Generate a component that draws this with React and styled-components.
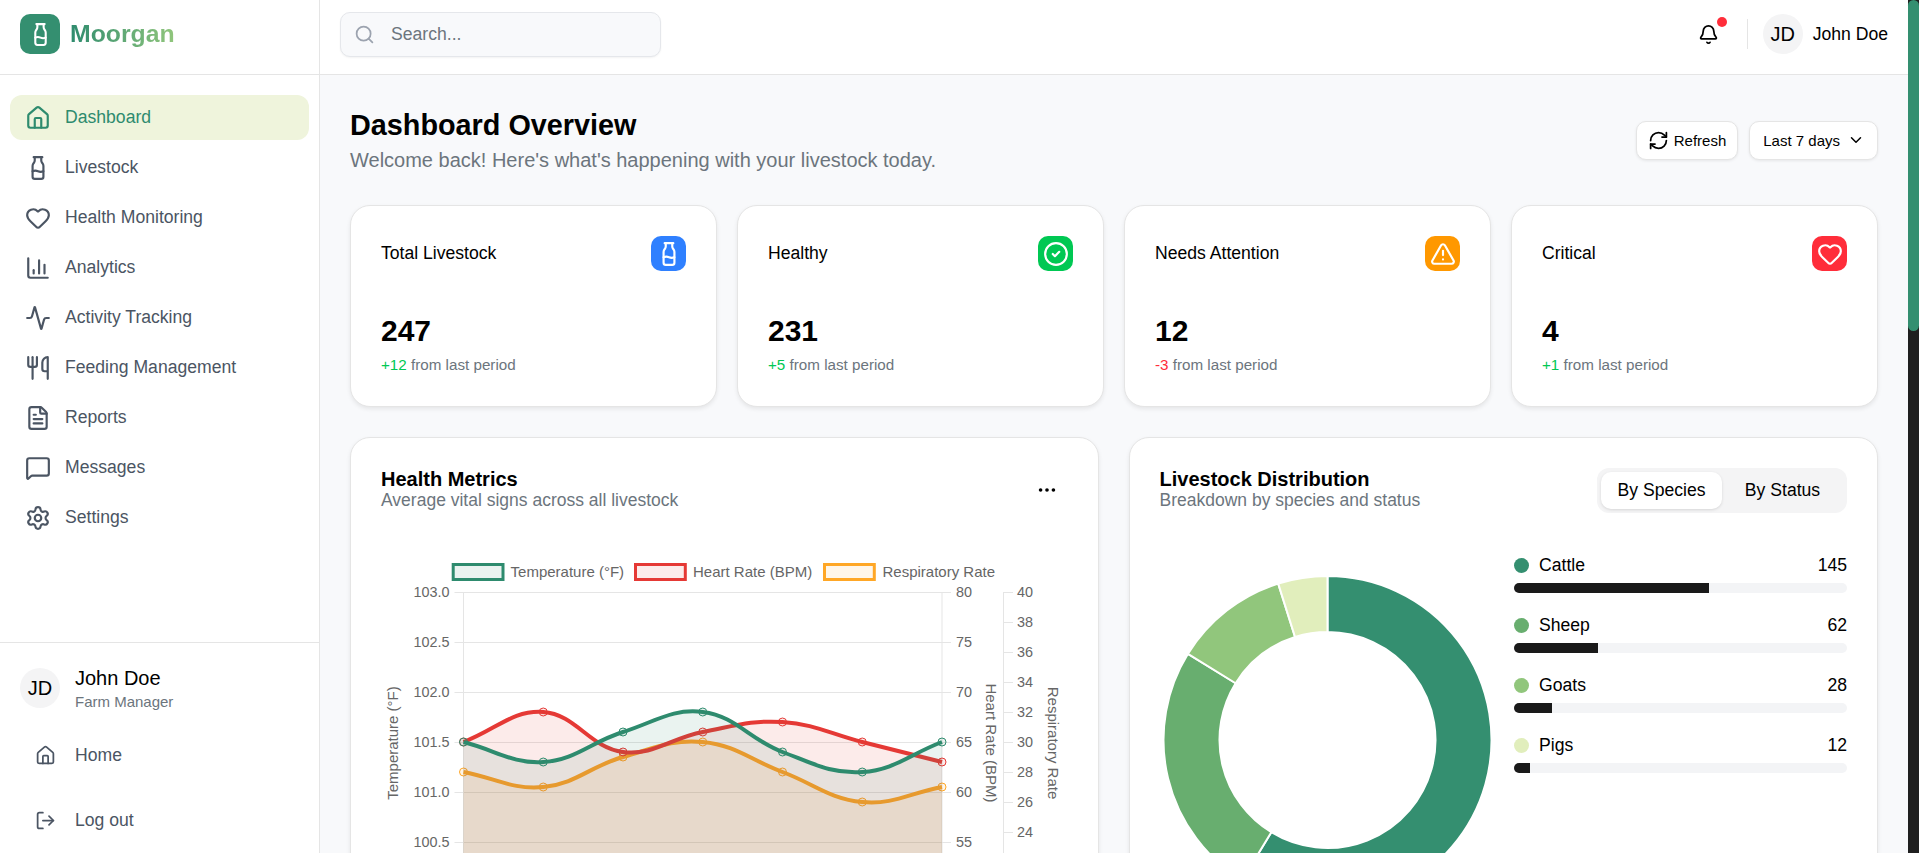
import React from 'react';
import styled, {createGlobalStyle} from 'styled-components';
import {
  Home, Milk, Heart, ChartColumn, Activity, Utensils, FileText,
  MessageSquare, Settings, LogOut, Search, Bell, RefreshCw, ChevronDown,
  CircleCheck, TriangleAlert, Ellipsis,
} from 'lucide-react';

const GlobalStyle = createGlobalStyle`
  * { box-sizing: border-box; }
  html, body { margin: 0; height: 100%; overflow: hidden; }
  body {
    font-family: "Liberation Sans", Arial, sans-serif;
    background: #f8f9fb;
    color: #000;
  }
`;

const navItems = [
  {label: 'Dashboard', icon: Home, active: true},
  {label: 'Livestock', icon: Milk},
  {label: 'Health Monitoring', icon: Heart},
  {label: 'Analytics', icon: ChartColumn},
  {label: 'Activity Tracking', icon: Activity},
  {label: 'Feeding Management', icon: Utensils},
  {label: 'Reports', icon: FileText},
  {label: 'Messages', icon: MessageSquare},
  {label: 'Settings', icon: Settings},
];

const stats = [
  {title: 'Total Livestock', value: 247, change: '+12', up: true, color: '#2f80ff', icon: Milk},
  {title: 'Healthy', value: 231, change: '+5', up: true, color: '#00c853', icon: CircleCheck},
  {title: 'Needs Attention', value: 12, change: '-3', up: false, color: '#ff9800', icon: TriangleAlert},
  {title: 'Critical', value: 4, change: '+1', up: true, color: '#ff2d3a', icon: Heart},
];

const species = [
  {name: 'Cattle', count: 145, color: '#348f70'},
  {name: 'Sheep', count: 62, color: '#68ae6f'},
  {name: 'Goats', count: 28, color: '#91c67c'},
  {name: 'Pigs', count: 12, color: '#e1eebc'},
];
const totalCount = 247;

// chart geometry
const chart = {left: 112.5, right: 591, top: 82, tick: 50, width: 748, height: 430};
const stepX = (chart.right - chart.left) / 6;
const series = [
  {
    name: 'Temperature (°F)',
    stroke: '#2e8b6e',
    fill: 'rgba(46,139,110,0.1)',
    y: v => chart.top + (103 - v) * 100,
    data: [101.5, 101.3, 101.6, 101.8, 101.4, 101.2, 101.5],
    boxX: 100.7,
    textX: 159.6,
  },
  {
    name: 'Heart Rate (BPM)',
    stroke: '#e53935',
    fill: 'rgba(229,57,53,0.1)',
    y: v => chart.top + (80 - v) * 10,
    data: [65, 68, 64, 66, 67, 65, 63],
    boxX: 283,
    textX: 342,
  },
  {
    name: 'Respiratory Rate',
    stroke: '#ffa726',
    fill: 'rgba(255,167,38,0.1)',
    y: v => chart.top + (40 - v) * 15,
    data: [28, 27, 29, 30, 28, 26, 27],
    boxX: 472,
    textX: 531.5,
  },
];

// same curve as chart.js tension 0.4
function splinePath(points) {
  const t = 0.4;
  const ctrl = points.map((p, i) => {
    const prev = points[i - 1] || p;
    const next = points[i + 1] || p;
    const d01 = Math.hypot(p.x - prev.x, p.y - prev.y);
    const d12 = Math.hypot(next.x - p.x, next.y - p.y);
    const sum = d01 + d12 || 1;
    const fa = (t * d01) / sum;
    const fb = (t * d12) / sum;
    return {
      inX: p.x - fa * (next.x - prev.x),
      inY: p.y - fa * (next.y - prev.y),
      outX: p.x + fb * (next.x - prev.x),
      outY: p.y + fb * (next.y - prev.y),
    };
  });
  let d = `M${points[0].x} ${points[0].y}`;
  for (let i = 1; i < points.length; i++) {
    d += ` C${ctrl[i - 1].outX} ${ctrl[i - 1].outY} ${ctrl[i].inX} ${ctrl[i].inY} ${points[i].x} ${points[i].y}`;
  }
  return d;
}

function arcPath(cx, cy, r, r2, a0, a1) {
  const pt = (rad, a) => [cx + rad * Math.sin(a), cy - rad * Math.cos(a)];
  const large = a1 - a0 > Math.PI ? 1 : 0;
  const [x0, y0] = pt(r, a0);
  const [x1, y1] = pt(r, a1);
  const [x2, y2] = pt(r2, a1);
  const [x3, y3] = pt(r2, a0);
  return `M${x0} ${y0}A${r} ${r} 0 ${large} 1 ${x1} ${y1}L${x2} ${y2}A${r2} ${r2} 0 ${large} 0 ${x3} ${y3}Z`;
}

function HealthChart() {
  const leftTicks = ['103.0', '102.5', '102.0', '101.5', '101.0', '100.5', '100.0'];
  const heartTicks = [80, 75, 70, 65, 60, 55, 50];
  const respTicks = [40, 38, 36, 34, 32, 30, 28, 26, 24, 22, 20];
  const bottom = chart.top + chart.tick * 6;
  return (
    <ChartSvg viewBox={`0 0 ${chart.width} ${chart.height}`}>
      {leftTicks.map((t, i) => {
        const y = chart.top + i * chart.tick + 0.5;
        return (
          <g key={t}>
            <line x1={chart.left - 9} x2={chart.right + 9} y1={y} y2={y} stroke="#e5e5e5" />
            <TickText x={chart.left - 14} y={y + 4} textAnchor="end">{t}</TickText>
            <TickText x={chart.right + 14} y={y + 4}>{heartTicks[i]}</TickText>
          </g>
        );
      })}
      {respTicks.map((t, i) => {
        const y = chart.top + i * 30 + 0.5;
        return (
          <g key={t}>
            <line x1={652.5} x2={662} y1={y} y2={y} stroke="#e5e5e5" />
            <TickText x={666} y={y + 4}>{t}</TickText>
          </g>
        );
      })}
      <line x1={chart.left} x2={chart.left} y1={chart.top} y2={bottom} stroke="#e5e5e5" />
      <line x1={chart.right} x2={chart.right} y1={chart.top} y2={bottom} stroke="#e5e5e5" />
      <line x1={652.5} x2={652.5} y1={chart.top} y2={bottom} stroke="#e5e5e5" />

      <AxisTitle transform="translate(47 233) rotate(-90)">Temperature (°F)</AxisTitle>
      <AxisTitle transform="translate(634.5 233) rotate(90)">Heart Rate (BPM)</AxisTitle>
      <AxisTitle transform="translate(697 233) rotate(90)">Respiratory Rate</AxisTitle>

      {[...series].reverse().map(s => {
        const pts = s.data.map((v, i) => ({x: chart.left + i * stepX, y: s.y(v)}));
        const line = splinePath(pts);
        return (
          <g key={s.name}>
            <path d={`${line} L${chart.right} ${bottom} L${chart.left} ${bottom} Z`} fill={s.fill} />
            <path d={line} fill="none" stroke={s.stroke} strokeWidth="4" />
            {pts.map(p => (
              <circle key={p.x} cx={p.x} cy={p.y} r="4" fill={s.fill} stroke={s.stroke} strokeWidth="1" />
            ))}
          </g>
        );
      })}

      {series.map(s => (
        <g key={s.name}>
          <rect x={s.boxX + 1.5} y={54.5} width={49.8} height={15} fill={s.fill} stroke={s.stroke} strokeWidth="3" />
          <LegendText x={s.textX} y={67}>{s.name}</LegendText>
        </g>
      ))}
    </ChartSvg>
  );
}

function Donut() {
  let start = 0;
  return (
    <DonutSvg viewBox="0 0 330 330">
      {species.map(s => {
        const end = start + (s.count / totalCount) * Math.PI * 2;
        const d = arcPath(164.5, 165, 164, 108, start, end);
        start = end;
        return <path key={s.name} d={d} fill={s.color} stroke="#fff" strokeWidth="2" />;
      })}
    </DonutSvg>
  );
}

export default function App() {
  return (
    <Layout>
      <GlobalStyle />
      <Sidebar>
        <Brand>
          <BrandIcon><Milk size={25} color="#fff" /></BrandIcon>
          <BrandName>Moorgan</BrandName>
        </Brand>
        <Nav>
          {navItems.map(item => (
            <NavItem key={item.label} $active={item.active}>
              <item.icon size={26} />
              {item.label}
            </NavItem>
          ))}
        </Nav>
        <SideFooter>
          <SideUser>
            <Avatar>JD</Avatar>
            <div>
              <SideName>John Doe</SideName>
              <SideRole>Farm Manager</SideRole>
            </div>
          </SideUser>
          <FootLink><Home size={21} />Home</FootLink>
          <FootLink><LogOut size={21} />Log out</FootLink>
        </SideFooter>
      </Sidebar>
      <Right>
        <Header>
          <SearchBox>
            <Search size={21} color="#9ca3af" />
            <SearchInput placeholder="Search..." />
          </SearchBox>
          <HeaderEnd>
            <BellWrap>
              <Bell size={21} />
              <Dot />
            </BellWrap>
            <HeaderRule />
            <Avatar>JD</Avatar>
            <HeaderName>John Doe</HeaderName>
          </HeaderEnd>
        </Header>
        <Main>
          <TitleRow>
            <div>
              <PageTitle>Dashboard Overview</PageTitle>
              <PageSub>Welcome back! Here's what's happening with your livestock today.</PageSub>
            </div>
            <Actions>
              <RefreshButton><RefreshCw size={21} />Refresh</RefreshButton>
              <RangeButton>Last 7 days<ChevronDown size={18} /></RangeButton>
            </Actions>
          </TitleRow>
          <StatGrid>
            {stats.map(s => (
              <StatCard key={s.title}>
                <StatTop>
                  <StatTitle>{s.title}</StatTitle>
                  <StatIcon $color={s.color}><s.icon size={26} color="#fff" /></StatIcon>
                </StatTop>
                <StatValue>{s.value}</StatValue>
                <StatNote><Change $up={s.up}>{s.change}</Change> from last period</StatNote>
              </StatCard>
            ))}
          </StatGrid>
          <ChartGrid>
            <ChartCard>
              <CardHead>
                <div>
                  <CardTitle>Health Metrics</CardTitle>
                  <CardSub>Average vital signs across all livestock</CardSub>
                </div>
                <MoreButton><Ellipsis size={22} /></MoreButton>
              </CardHead>
              <HealthChart />
            </ChartCard>
            <ChartCard>
              <CardHead>
                <div>
                  <CardTitle>Livestock Distribution</CardTitle>
                  <CardSub>Breakdown by species and status</CardSub>
                </div>
                <Tabs>
                  <Tab $active>By Species</Tab>
                  <Tab>By Status</Tab>
                </Tabs>
              </CardHead>
              <DistBody>
                <Donut />
                <DistList>
                  {species.map(s => (
                    <div key={s.name}>
                      <DistLabel>
                        <Swatch $color={s.color} />
                        <DistName>{s.name}</DistName>
                        {s.count}
                      </DistLabel>
                      <Track>
                        <Fill style={{width: `${(s.count / totalCount) * 100}%`}} />
                      </Track>
                    </div>
                  ))}
                </DistList>
              </DistBody>
            </ChartCard>
          </ChartGrid>
        </Main>
      </Right>
      <ScrollRail>
        <ScrollThumb />
      </ScrollRail>
    </Layout>
  );
}

const Layout = styled.div`
  display: flex;
  height: 100vh;
  overflow: hidden;
`;

const Sidebar = styled.aside`
  width: 320px;
  flex-shrink: 0;
  display: flex;
  flex-direction: column;
  background: #fff;
  border-right: 1px solid #e5e5e5;
`;

const Brand = styled.div`
  height: 75px;
  flex-shrink: 0;
  display: flex;
  align-items: center;
  gap: 10px;
  padding: 0 20px 6px;
  border-bottom: 1px solid #e5e5e5;
`;

const BrandIcon = styled.div`
  width: 40px;
  height: 40px;
  border-radius: 10px;
  background: #348f70;
  display: flex;
  align-items: center;
  justify-content: center;
`;

const BrandName = styled.div`
  font-size: 24.8px;
  font-weight: 700;
  background: linear-gradient(90deg, #2e8b6e, #91c67c);
  -webkit-background-clip: text;
  background-clip: text;
  color: transparent;
`;

const Nav = styled.nav`
  flex: 1;
  padding: 20px 10px;
  display: flex;
  flex-direction: column;
  gap: 5px;
`;

const NavItem = styled.div`
  height: 45px;
  display: flex;
  align-items: center;
  gap: 14px;
  padding: 0 15px;
  border-radius: 12px;
  font-size: 17.6px;
  color: ${p => (p.$active ? '#2e8b6e' : '#4b5563')};
  background: ${p => (p.$active ? '#eff4dc' : 'transparent')};
`;

const SideFooter = styled.div`
  height: 211px;
  flex-shrink: 0;
  border-top: 1px solid #e5e5e5;
  padding: 25px 20px 0;
`;

const SideUser = styled.div`
  height: 40px;
  display: flex;
  align-items: center;
  gap: 15px;
  margin-bottom: 15px;
`;

const Avatar = styled.div`
  width: 40px;
  height: 40px;
  border-radius: 50%;
  background: #f4f4f5;
  display: flex;
  align-items: center;
  justify-content: center;
  font-size: 20px;
  flex-shrink: 0;
`;

const SideName = styled.div`
  font-size: 20px;
  line-height: 24px;
`;

const SideRole = styled.div`
  margin-top: 3px;
  font-size: 15px;
  line-height: 18px;
  color: #6c757d;
`;

const FootLink = styled.div`
  height: 65px;
  display: flex;
  align-items: center;
  gap: 19px;
  padding-left: 15px;
  font-size: 17.6px;
  color: #4b5563;
`;

const Right = styled.div`
  flex: 1;
  min-width: 0;
  display: flex;
  flex-direction: column;
`;

const Header = styled.header`
  height: 75px;
  flex-shrink: 0;
  display: flex;
  align-items: center;
  justify-content: space-between;
  padding: 0 20px 6px;
  background: #fff;
  border-bottom: 1px solid #e5e5e5;
`;

const SearchBox = styled.div`
  width: 321px;
  height: 45px;
  display: flex;
  align-items: center;
  gap: 14px;
  padding: 0 13px;
  background: #f8f9fb;
  border: 1px solid #e5e7eb;
  border-radius: 10px;
  box-shadow: 0 1px 2px rgba(0, 0, 0, 0.05);
`;

const SearchInput = styled.input`
  flex: 1;
  min-width: 0;
  border: none;
  outline: none;
  background: transparent;
  font: inherit;
  font-size: 17.6px;
  &::placeholder {
    color: #6c757d;
  }
`;

const HeaderEnd = styled.div`
  display: flex;
  align-items: center;
`;

const BellWrap = styled.div`
  position: relative;
  display: flex;
  margin-right: 28px;
`;

const Dot = styled.span`
  position: absolute;
  top: -7px;
  right: -8px;
  width: 10px;
  height: 10px;
  border-radius: 50%;
  background: #ff2d3a;
`;

const HeaderRule = styled.div`
  width: 1px;
  height: 30px;
  background: #e5e5e5;
  margin-right: 15px;
`;

const HeaderName = styled.div`
  font-size: 17.6px;
  margin-left: 10px;
`;

const Main = styled.main`
  flex: 1;
  overflow: hidden;
  padding: 33px 30px 30px;
`;

const ScrollRail = styled.div`
  width: 11px;
  flex-shrink: 0;
  background: #1f1f1f;
`;

const ScrollThumb = styled.div`
  height: 331px;
  background: #348f70;
  border-radius: 6px;
`;

const TitleRow = styled.div`
  display: flex;
  justify-content: space-between;
  align-items: center;
  margin-bottom: 33px;
`;

const PageTitle = styled.h1`
  margin: 0;
  font-size: 28.8px;
  line-height: 34px;
  font-weight: 700;
`;

const PageSub = styled.p`
  margin: 6px 0 0;
  font-size: 20px;
  line-height: 24px;
  color: #6c757d;
`;

const Actions = styled.div`
  display: flex;
  gap: 11px;
`;

const RefreshButton = styled.button`
  height: 39px;
  display: flex;
  align-items: center;
  gap: 5px;
  padding: 0 11px;
  font: inherit;
  font-size: 15px;
  color: #000;
  background: #fff;
  border: 1px solid #e5e5e5;
  border-radius: 10px;
  box-shadow: 0 1px 3px rgba(0, 0, 0, 0.08);
`;

const RangeButton = styled(RefreshButton)`
  gap: 7px;
  padding: 0 12px 0 13px;
`;

const StatGrid = styled.div`
  display: grid;
  grid-template-columns: repeat(4, 1fr);
  gap: 20px;
  margin-bottom: 30px;
`;

const StatCard = styled.div`
  height: 202px;
  padding: 30px;
  background: #fff;
  border: 1px solid #e5e5e5;
  border-radius: 20px;
  box-shadow: 0 2px 4px rgba(0, 0, 0, 0.08);
`;

const StatTop = styled.div`
  display: flex;
  justify-content: space-between;
  align-items: flex-start;
  margin-bottom: 41px;
`;

const StatTitle = styled.div`
  font-size: 17.6px;
  line-height: 35px;
`;

const StatIcon = styled.div`
  width: 35px;
  height: 35px;
  border-radius: 10px;
  background: ${p => p.$color};
  display: flex;
  align-items: center;
  justify-content: center;
`;

const StatValue = styled.div`
  font-size: 30px;
  line-height: 38px;
  font-weight: 700;
`;

const StatNote = styled.div`
  margin-top: 6px;
  font-size: 15.2px;
  line-height: 18px;
  color: #6c757d;
`;

const Change = styled.span`
  color: ${p => (p.$up ? '#00c853' : '#ff2d3a')};
`;

const ChartGrid = styled.div`
  display: grid;
  grid-template-columns: 748.5px 1fr;
  gap: 30px;
`;

const ChartCard = styled.section`
  min-height: 600px;
  padding: 30px;
  background: #fff;
  border: 1px solid #e5e5e5;
  border-radius: 20px;
  box-shadow: 0 2px 4px rgba(0, 0, 0, 0.08);
`;

const CardHead = styled.div`
  display: flex;
  justify-content: space-between;
  align-items: flex-start;
`;

const CardTitle = styled.h3`
  margin: 0;
  font-size: 20px;
  line-height: 22px;
  font-weight: 700;
`;

const CardSub = styled.p`
  margin: 0;
  font-size: 17.5px;
  line-height: 20px;
  color: #6c757d;
`;

const MoreButton = styled.div`
  margin: 11px 10px 0 0;
  display: flex;
`;

const ChartSvg = styled.svg`
  display: block;
  width: 748px;
  height: 430px;
  margin: 0 -30px;
`;

const Tabs = styled.div`
  display: flex;
  padding: 4px;
  background: #f4f4f5;
  border-radius: 12px;
`;

const Tab = styled.div`
  width: 121px;
  height: 37px;
  display: flex;
  align-items: center;
  justify-content: center;
  font-size: 17.6px;
  border-radius: 10px;
  background: ${p => (p.$active ? '#fff' : 'transparent')};
  box-shadow: ${p => (p.$active ? '0 1px 3px rgba(0,0,0,0.12)' : 'none')};
`;

const TickText = styled.text`
  font-size: 14.4px;
  fill: #666;
`;

const LegendText = styled.text`
  font-size: 15px;
  fill: #666;
`;

const AxisTitle = styled.text`
  font-size: 15px;
  fill: #666;
  text-anchor: middle;
`;

const DistBody = styled.div`
  display: flex;
  gap: 21.5px;
  margin-top: 37px;
`;

const DonutSvg = styled.svg`
  width: 330px;
  height: 330px;
  flex-shrink: 0;
  margin: 25px 0 0 3px;
  overflow: visible;
`;

const DistList = styled.div`
  flex: 1;
  display: flex;
  flex-direction: column;
  gap: 17px;
`;

const DistLabel = styled.div`
  display: flex;
  align-items: center;
  font-size: 17.6px;
  line-height: 30px;
  margin-bottom: 3px;
`;

const Swatch = styled.span`
  width: 15px;
  height: 15px;
  border-radius: 50%;
  background: ${p => p.$color};
  margin-right: 10px;
`;

const DistName = styled.span`
  flex: 1;
`;

const Track = styled.div`
  height: 10px;
  background: #f3f4f6;
  border-radius: 5px;
  overflow: hidden;
`;

const Fill = styled.div`
  height: 100%;
  background: #1a1a1a;
`;
